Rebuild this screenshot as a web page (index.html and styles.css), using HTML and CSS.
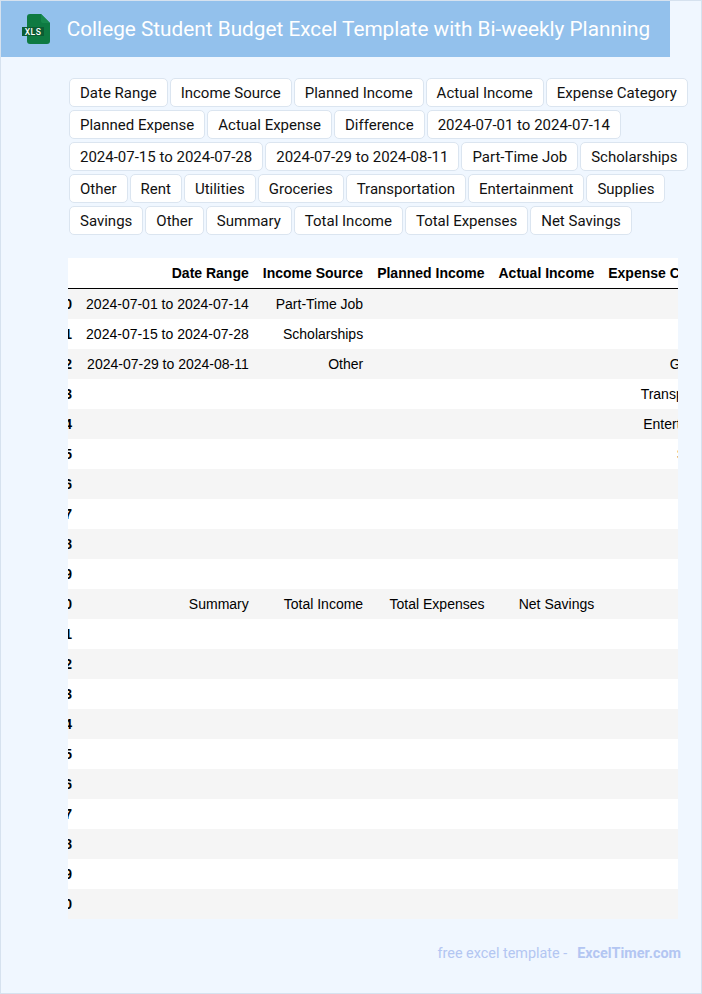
FILE: index.html
```html
<!DOCTYPE html>
<html lang="en">
<head>
<meta charset="utf-8">
<title>College Student Budget Excel Template with Bi-weekly Planning</title>
<link rel="stylesheet" href="styles.css">
</head>
<body>
<div class="page">
  <header class="banner">
    <svg class="logo" width="28" height="30" viewBox="0 0 28 30" aria-hidden="true">
      <path d="M8 0H19L28 9V27a3 3 0 0 1-3 3H8a3 3 0 0 1-3-3V3a3 3 0 0 1 3-3Z" fill="#0e7a42"/>
      <path d="M19 0L28 9H21a2 2 0 0 1-2-2Z" fill="#17894d"/>
      <rect x="0" y="13" width="22" height="9" fill="#0b5c33"/>
      <text x="11" y="20.8" class="logo-text" text-anchor="middle">XLS</text>
    </svg>
    <h1 class="title">College Student Budget Excel Template with Bi-weekly Planning</h1>
  </header>
  <section class="tags">
    <span class="tag">Date Range</span><span class="tag">Income Source</span><span class="tag">Planned Income</span><span class="tag">Actual Income</span><span class="tag">Expense Category</span>
    <span class="tag">Planned Expense</span><span class="tag">Actual Expense</span><span class="tag">Difference</span><span class="tag">2024-07-01 to 2024-07-14</span>
    <span class="tag">2024-07-15 to 2024-07-28</span><span class="tag">2024-07-29 to 2024-08-11</span><span class="tag">Part-Time Job</span><span class="tag">Scholarships</span>
    <span class="tag">Other</span><span class="tag">Rent</span><span class="tag">Utilities</span><span class="tag">Groceries</span><span class="tag">Transportation</span><span class="tag">Entertainment</span><span class="tag">Supplies</span>
    <span class="tag">Savings</span><span class="tag">Other</span><span class="tag">Summary</span><span class="tag">Total Income</span><span class="tag">Total Expenses</span><span class="tag">Net Savings</span>
  </section>
  <div class="table-clip">
    <table class="sheet">
      <thead>
        <tr><th class="idx"></th><th>Date Range</th><th>Income Source</th><th>Planned Income</th><th>Actual Income</th><th>Expense Category</th></tr>
      </thead>
      <tbody>
        <tr><th class="idx">0</th><td>2024-07-01 to 2024-07-14</td><td>Part-Time Job</td><td></td><td></td><td>Rent</td></tr>
        <tr><th class="idx">1</th><td>2024-07-15 to 2024-07-28</td><td>Scholarships</td><td></td><td></td><td>Utilities</td></tr>
        <tr><th class="idx">2</th><td>2024-07-29 to 2024-08-11</td><td>Other</td><td></td><td></td><td>Groceries</td></tr>
        <tr><th class="idx">3</th><td></td><td></td><td></td><td></td><td>Transportation</td></tr>
        <tr><th class="idx">4</th><td></td><td></td><td></td><td></td><td>Entertainment</td></tr>
        <tr><th class="idx">5</th><td></td><td></td><td></td><td></td><td>Supplies</td></tr>
        <tr><th class="idx">6</th><td></td><td></td><td></td><td></td><td></td></tr>
        <tr><th class="idx">7</th><td></td><td></td><td></td><td></td><td></td></tr>
        <tr><th class="idx">8</th><td></td><td></td><td></td><td></td><td></td></tr>
        <tr><th class="idx">9</th><td></td><td></td><td></td><td></td><td></td></tr>
        <tr><th class="idx">10</th><td>Summary</td><td>Total Income</td><td>Total Expenses</td><td>Net Savings</td><td></td></tr>
        <tr><th class="idx">11</th><td></td><td></td><td></td><td></td><td></td></tr>
        <tr><th class="idx">12</th><td></td><td></td><td></td><td></td><td></td></tr>
        <tr><th class="idx">13</th><td></td><td></td><td></td><td></td><td></td></tr>
        <tr><th class="idx">14</th><td></td><td></td><td></td><td></td><td></td></tr>
        <tr><th class="idx">15</th><td></td><td></td><td></td><td></td><td></td></tr>
        <tr><th class="idx">16</th><td></td><td></td><td></td><td></td><td></td></tr>
        <tr><th class="idx">17</th><td></td><td></td><td></td><td></td><td></td></tr>
        <tr><th class="idx">18</th><td></td><td></td><td></td><td></td><td></td></tr>
        <tr><th class="idx">19</th><td></td><td></td><td></td><td></td><td></td></tr>
        <tr><th class="idx">20</th><td></td><td></td><td></td><td></td><td></td></tr>
      </tbody>
    </table>
  </div>
  <footer class="credit">free excel template -<a class="credit-link">ExcelTimer.com</a></footer>
</div>
</body>
</html>
```
FILE: styles.css
```css
* { box-sizing: border-box; }
html, body { margin: 0; padding: 0; }
body { background: #f0f7ff; }
.page {
  width: 702px;
  height: 994px;
  background: #f0f7ff;
  border: 1px solid #d6e2ef;
  display: flex;
  flex-direction: column;
  font-family: Roboto, sans-serif;
}
.banner {
  width: 669px;
  height: 56px;
  flex: none;
  background: #93c1ec;
  display: flex;
  align-items: center;
  padding-left: 21px;
}
.logo { flex: none; margin-right: 17px; }
.logo-text { font: 500 8.5px Roboto, sans-serif; fill: #fff; letter-spacing: 0.5px; }
.title {
  margin: 0;
  margin-left: -0.3px;
  font-size: 20.77px;
  font-weight: 400;
  color: #fff;
  white-space: nowrap;
}
.tags {
  margin: 21px 0 0 68px;
  width: 625px;
  display: flex;
  flex-wrap: wrap;
  gap: 3px 2px;
}
.tag {
  height: 29px;
  padding: 0 10px;
  display: flex;
  align-items: center;
  background: #fff;
  border: 1px solid #dbe5f0;
  border-radius: 5px;
  font-size: 15px;
  color: #111;
  white-space: nowrap;
}
.table-clip {
  margin: 23px 0 0 67px;
  width: 610px;
  overflow: hidden;
  flex: none;
}
.sheet {
  margin-left: -18.5px;
  border-collapse: collapse;
  border-spacing: 0;
  font-family: "Liberation Sans", Arial, sans-serif;
  font-size: 14px;
  line-height: 16px;
  color: #000;
  background: #fff;
  white-space: nowrap;
}
.sheet th, .sheet td {
  height: 30px;
  padding: 7px;
  text-align: right;
  vertical-align: middle;
  font-weight: 400;
}
.sheet th { font-weight: 700; }
.sheet thead th { border-bottom: 1px solid #000; }
.sheet tbody tr:nth-child(odd) { background: #f5f5f5; }
.credit {
  margin-top: 26px;
  padding-right: 20px;
  text-align: right;
  font-size: 14.4px;
  color: #b3c6f2;
}
.credit-link { margin-left: 10px; font-weight: 700; }
```
